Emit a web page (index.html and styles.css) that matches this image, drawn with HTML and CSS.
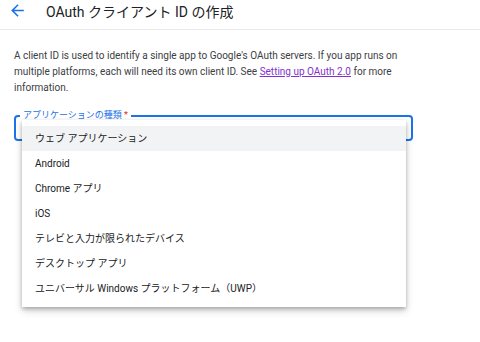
FILE: index.html
```html
<!DOCTYPE html>
<html>
  <head>
    <meta charset="utf-8" />
    <title>OAuth クライアント ID の作成</title>
    <meta name="viewport" content="width=device-width, initial-scale=1" />
    <link rel="stylesheet" href="styles.css">
  </head>
  <body>
    <div class="page-header">
      <svg class="back-arrow" width="19" height="19" viewBox="0 0 24 24">
        <path d="M20 11H7.83l5.59-5.59L12 4l-8 8 8 8 1.41-1.41L7.83 13H20v-2z" fill="#1a73e8"/>
      </svg>
      <div class="page-title">OAuth クライアント ID の作成</div>
    </div>

    <div class="content">
      <p class="intro">
        A client ID is used to identify a single app to Google's OAuth servers. If you app runs on
        multiple platforms, each will need its own client ID. See <a href="#">Setting up OAuth 2.0</a> for more
        information.
      </p>

      <div class="select-field">
        <div class="select-label">アプリケーションの種類 <span class="required">*</span></div>
        <div class="select-menu">
          <div class="menu-item active">ウェブ アプリケーション</div>
          <div class="menu-item">Android</div>
          <div class="menu-item">Chrome アプリ</div>
          <div class="menu-item">iOS</div>
          <div class="menu-item">テレビと入力が限られたデバイス</div>
          <div class="menu-item">デスクトップ アプリ</div>
          <div class="menu-item">ユニバーサル Windows プラットフォーム（UWP）</div>
        </div>
      </div>
    </div>
  </body>
</html>
```

FILE: styles.css
```css
html, body {
  height: 100%;
}

body {
  margin: 0;
  min-height: 342px;
  font-family: Roboto, "Noto Sans CJK JP", sans-serif;
  color: #202124;
  background: #fff;
}

.page-header {
  display: flex;
  align-items: center;
  height: 29px;
  border-bottom: 1px solid #e8eaed;
  padding-left: 8px;
}

.back-arrow {
  margin-top: -8px;
  margin-right: 19px;
}

.page-title {
  font-size: 14px;
  color: #202124;
  margin-top: -8px;
}

.content {
  padding: 0 14px;
}

.intro {
  width: 400px;
  font-size: 10px;
  line-height: 16px;
  margin: 18px 0 0 0;
  color: #3c4043;
}

.intro a {
  color: #8430ce;
}

.select-field {
  position: relative;
  margin-top: 19px;
  width: 395px;
  height: 22px;
  border: 2px solid #1a73e8;
  border-radius: 4px;
}

.select-label {
  position: absolute;
  top: -8px;
  left: 4px;
  padding: 0 3px;
  background: #fff;
  font-size: 9px;
  line-height: 12px;
  color: #1a73e8;
}

.required {
  color: #d93025;
}

.select-menu {
  position: absolute;
  top: 3px;
  left: 6px;
  width: 384px;
  padding: 6px 0;
  background: #fff;
  box-shadow: 0 2px 4px rgba(0, 0, 0, 0.25), 0 4px 8px rgba(0, 0, 0, 0.15);
}

.menu-item {
  height: 25px;
  line-height: 25px;
  padding-left: 13px;
  font-size: 10px;
  color: #202124;
}

.menu-item.active {
  background: #f1f3f4;
}
```
